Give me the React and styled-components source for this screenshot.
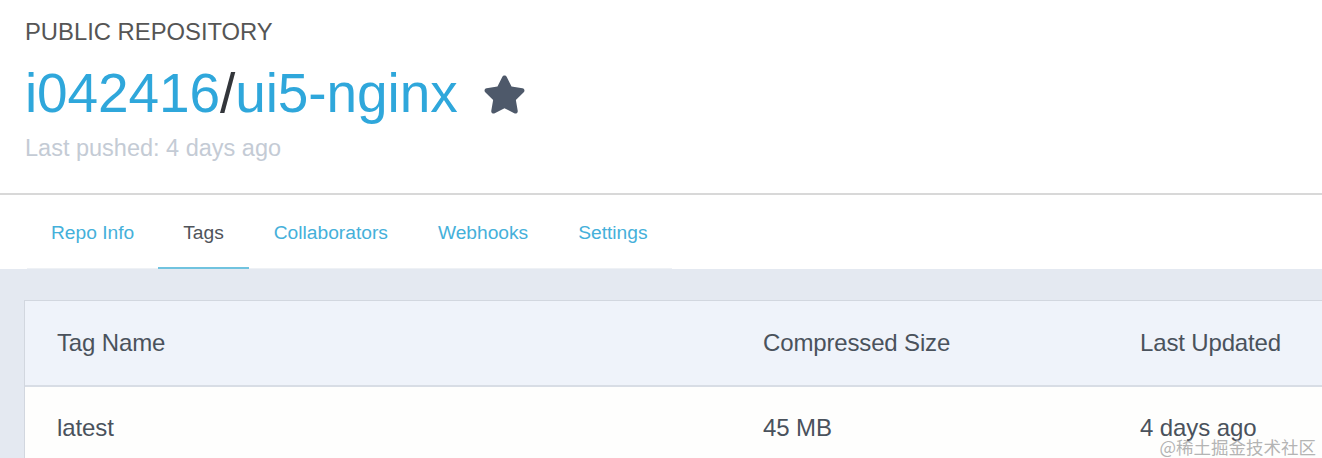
import React from 'react';
import styled, { createGlobalStyle } from 'styled-components';
import { FaStar } from 'react-icons/fa';

const GlobalStyle = createGlobalStyle`
    html, body {
        margin: 0;
        padding: 0;
        background: #ffffff;
        overflow: hidden;
    }
    body {
        font-family: "Liberation Sans", Arial, sans-serif;
    }
`;

const Page = styled.div`
    position: relative;
    width: 1322px;
    height: 458px;
    overflow: hidden;
`;

const Header = styled.header`
    height: 195px;
    padding: 18px 25px 0;
    box-sizing: border-box;
    border-bottom: 2px solid #d8d8d8;
`;

const Kicker = styled.div`
    font-size: 23.8px;
    line-height: 28px;
    color: #555555;
`;

const TitleRow = styled.div`
    display: flex;
    align-items: center;
    gap: 25px;
    margin-top: 15px;
`;

const Title = styled.h1`
    margin: 0;
    font-size: 55px;
    line-height: 64px;
    font-weight: normal;
    color: #2fa7db;
    letter-spacing: -0.1px;
`;

const Slash = styled.span`
    color: #33363b;
`;

const StarIcon = styled(FaStar)`
    width: 43px;
    height: 43px;
    color: #4e596a;
    margin-top: 3px;
`;

const Pushed = styled.div`
    margin-top: 9px;
    font-size: 23.5px;
    line-height: 28px;
    color: #c4cbd5;
`;

const TabBar = styled.div`
    height: 74px;
    background: #ffffff;
    padding-left: 27px;
    box-sizing: border-box;
`;

const TabList = styled.nav`
    display: flex;
    width: 645px;
    height: 100%;
    border-bottom: 1px solid #eef1f5;
    box-sizing: border-box;
`;

const Tab = styled.a`
    display: flex;
    align-items: center;
    height: calc(100% + 1px);
    padding: 4px ${p => p.$pad}px 0;
    box-sizing: border-box;
    white-space: nowrap;
    font-size: 19.2px;
    color: ${p => (p.$active ? '#4f545a' : '#45b0da')};
    border-bottom: 2px solid ${p => (p.$active ? '#71c3df' : 'transparent')};
    cursor: pointer;
`;

const Content = styled.main`
    background: #e4e9f1;
    padding: 31px 0 0 24px;
    height: 200px;
`;

const Card = styled.div`
    margin-right: -20px;
    border: 1px solid #d2d7df;
    background: #fefefd;
`;

const Row = styled.div`
    display: grid;
    grid-template-columns: 706px 377px 1fr;
    align-items: center;
    height: ${p => (p.$head ? 84 : 82)}px;
    padding-left: 32px;
    background: ${p => (p.$head ? '#eff3fa' : '#fefefd')};
    border-bottom: ${p => (p.$head ? '2px solid #d8dde5' : 'none')};
    font-size: 24px;
    color: #4a525c;
`;

const Cell = styled.div`
    white-space: nowrap;
    letter-spacing: ${p => (p.$head ? '-0.15px' : '-0.1px')};
`;

const Watermark = styled.div`
    position: absolute;
    right: 6px;
    bottom: 0px;
    font-family: "Noto Sans CJK SC", "Liberation Sans", sans-serif;
    font-size: 17.5px;
    line-height: 22px;
    color: rgba(160, 160, 160, 0.8);
`;

const tabs = [
    { name: 'Repo Info', pad: 24 },
    { name: 'Tags', pad: 25, active: true },
    { name: 'Collaborators', pad: 25 },
    { name: 'Webhooks', pad: 25 },
    { name: 'Settings', pad: 25 },
];

const columns = ['Tag Name', 'Compressed Size', 'Last Updated'];
const rows = [['latest', '45 MB', '4 days ago']];

const App = () => (
    <Page>
        <GlobalStyle />
        <Header>
            <Kicker>PUBLIC REPOSITORY</Kicker>
            <TitleRow>
                <Title>
                    i042416<Slash>/</Slash>ui5-nginx
                </Title>
                <StarIcon />
            </TitleRow>
            <Pushed>Last pushed: 4 days ago</Pushed>
        </Header>
        <TabBar>
            <TabList>
                {tabs.map(t => (
                    <Tab key={t.name} $pad={t.pad} $active={t.active}>
                        {t.name}
                    </Tab>
                ))}
            </TabList>
        </TabBar>
        <Content>
            <Card>
                <Row $head>
                    {columns.map(c => (
                        <Cell key={c} $head>{c}</Cell>
                    ))}
                </Row>
                {rows.map((r, i) => (
                    <Row key={i}>
                        {r.map((v, j) => (
                            <Cell key={j}>{v}</Cell>
                        ))}
                    </Row>
                ))}
            </Card>
        </Content>
        <Watermark>@稀土掘金技术社区</Watermark>
    </Page>
);

export default App;
